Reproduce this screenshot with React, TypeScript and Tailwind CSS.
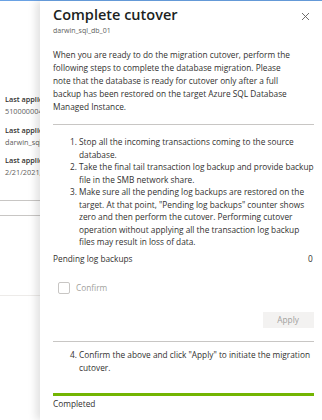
import React from "react";

const font = { fontFamily: '"Open Sans", "Noto Sans", sans-serif' };

function LeftColumn() {
  return (
    <div className="w-[40px] shrink-0 overflow-hidden bg-white">
      <div className="pt-[92px] pl-[5px] text-[7.3px] leading-[12px] whitespace-nowrap">
        <div className="font-semibold text-[#323130]">Last applied LSN</div>
        <div className="text-[#605e5c]">5100000048</div>
        <div className="mt-[7px] font-semibold text-[#323130]">Last applied backup</div>
        <div className="text-[#605e5c]">darwin_sql_db_01</div>
        <div className="mt-[6px] font-semibold text-[#323130]">Last applied at</div>
        <div className="text-[#605e5c]">2/21/2021, 10:12 AM</div>
      </div>
      <div className="mt-[22px] h-px bg-[#c8c6c4]" />
      <div className="mt-[14px] h-px bg-[#c8c6c4]" />
      <div className="mt-[79px] h-px bg-[#edebe9]" />
    </div>
  );
}

function CloseIcon() {
  return (
    <svg width="9" height="9" viewBox="0 0 9 9" className="block">
      <path d="M1 1 L8 8 M8 1 L1 8" stroke="#605e5c" strokeWidth="0.9" fill="none" />
    </svg>
  );
}

function Step({ n, children }: { n: string; children: React.ReactNode }) {
  return (
    <li className="flex">
      <span className="w-[9px] shrink-0">{n}</span>
      <span className="whitespace-nowrap">{children}</span>
    </li>
  );
}

export default function App() {
  return (
    <div className="w-[322px] h-[420px] overflow-hidden bg-white flex flex-col" style={font}>
      <div className="h-px shrink-0 bg-[#6aa2e4]" />
      <div className="flex flex-1 min-h-0">
        <LeftColumn />
        <div className="relative z-10 flex-1 bg-white shadow-[-4px_0_8px_rgba(0,0,0,0.12)] pl-[13px] pr-[14px] pt-[4px] text-[#323130]">
          <div className="absolute right-[18px] top-[11px]">
            <CloseIcon />
          </div>
          <div className="text-[14.5px] leading-[20px] font-semibold text-[#201f1e]">Complete cutover</div>
          <div className="mt-[1px] text-[7px] leading-[10px] text-[#605e5c]">darwin_sql_db_01</div>
          <p className="mt-[12px] text-[8.3px] leading-[13px] whitespace-nowrap">
            When you are ready to do the migration cutover, perform the
            <br />
            following steps to complete the database migration. Please
            <br />
            note that the database is ready for cutover only after a full
            <br />
            backup has been restored on the target Azure SQL Database
            <br />
            Managed Instance.
          </p>
          <div className="mt-[11px] h-px bg-[#c8c6c4]" />
          <ol className="mt-[11px] ml-[17px] text-[8.3px] leading-[12.5px]">
            <Step n="1.">
              Stop all the incoming transactions coming to the source
              <br />
              database.
            </Step>
            <Step n="2.">
              Take the final tail transaction log backup and provide backup
              <br />
              file in the SMB network share.
            </Step>
            <Step n="3.">
              Make sure all the pending log backups are restored on the
              <br />
              target. At that point, "Pending log backups" counter shows
              <br />
              zero and then perform the cutover. Performing cutover
              <br />
              operation without applying all the transaction log backup
              <br />
              files may result in loss of data.
            </Step>
          </ol>
          <div className="mt-[4px] flex justify-between text-[8.3px] leading-[12.5px]">
            <span>Pending log backups</span>
            <span className="pr-[1px]">0</span>
          </div>
          <div className="mt-[17px] ml-[5px] flex items-center gap-[6px]">
            <div className="w-[12px] h-[12px] rounded-[2px] border border-[#c8c6c4] bg-white" />
            <span className="text-[8.3px] leading-[12px] text-[#a19f9d]">Confirm</span>
          </div>
          <div className="mt-[18px] flex justify-end">
            <div className="w-[51px] h-[16px] bg-[#f3f2f1] flex items-center justify-center text-[8.3px] text-[#a19f9d]">
              Apply
            </div>
          </div>
          <div className="mt-[13px] h-px bg-[#c8c6c4]" />
          <ol className="mt-[7px] ml-[17px] text-[8.3px] leading-[12.5px]">
            <Step n="4.">
              Confirm the above and click "Apply" to initiate the migration
              <br />
              cutover.
            </Step>
          </ol>
          <div className="mt-[19px] h-[3px] bg-[#73b502]" />
          <div className="mt-[2px] text-[8.3px] leading-[12.5px]">Completed</div>
        </div>
      </div>
    </div>
  );
}
